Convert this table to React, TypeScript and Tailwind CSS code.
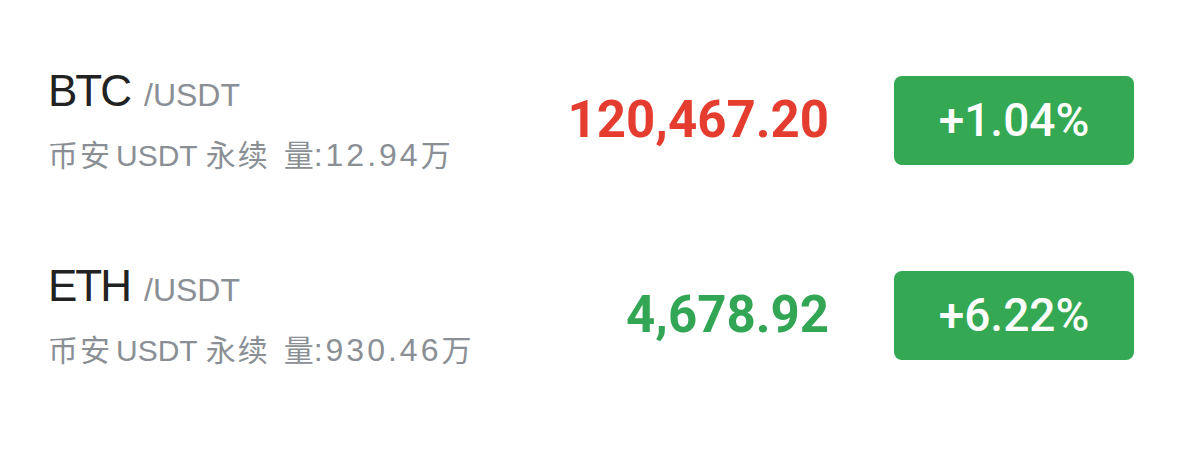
const rows = [
  { base: "BTC", vol: "12.94", price: "120,467.20", up: false, change: "+1.04%" },
  { base: "ETH", vol: "930.46", price: "4,678.92", up: true, change: "+6.22%" },
];

export default function App() {
  return (
    <div className="w-[1179px] h-[451px] bg-white pt-[23px] pl-[48px] pr-[45px]">
      {rows.map((r) => (
        <div key={r.base} className="flex h-[195px] items-center">
          <div className="flex flex-1 flex-col font-['Liberation_Sans','Noto_Sans_CJK_SC',sans-serif]">
            <div className="flex items-baseline">
              <span className="text-[44px] leading-[48px] tracking-[-2px] text-[#222222]">
                {r.base}
              </span>
              <span className="ml-[14px] text-[32px] text-[#8a8f95]">/USDT</span>
            </div>
            <div className="mt-[18px] whitespace-nowrap text-[30px] leading-[36px] text-[#8a8f95]">
              <span className="tracking-[2px]">币安</span>
              <span className="ml-[4px]">USDT</span>
              <span className="ml-[8px] tracking-[2px]">永续</span>
              <span className="ml-[14px]">量</span>
              <span className="text-[32px] tracking-[3px]">:{r.vol}</span>
              <span>万</span>
            </div>
          </div>
          <div
            className={`mr-[65px] font-['Roboto',sans-serif] text-[51px] font-bold ${r.up ? "text-[#33a656]" : "text-[#e43d30]"}`}
          >
            {r.price}
          </div>
          <div className="flex h-[89px] w-[240px] items-center justify-center rounded-[8px] bg-[#34a853] font-['Roboto',sans-serif] text-[46px] font-medium text-white">
            {r.change}
          </div>
        </div>
      ))}
    </div>
  );
}
